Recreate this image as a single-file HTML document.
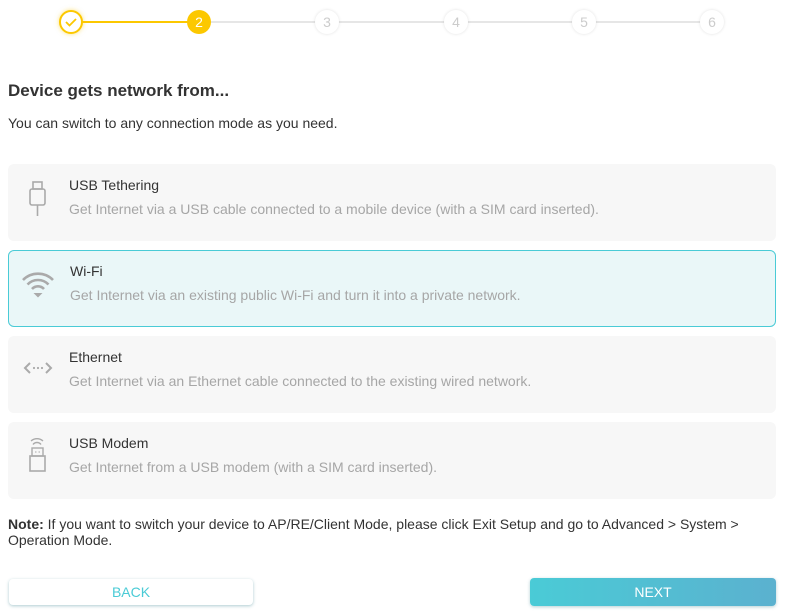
<!DOCTYPE html>
<html><head><meta charset="utf-8"><style>
body{margin:0;width:789px;height:613px;background:#fff;font-family:"Liberation Sans",Arial,sans-serif;position:relative;overflow:hidden}
.abs{position:absolute}
.line{position:absolute;top:21px;height:2px;background:#e6e6e6}
.st{position:absolute;top:10px;width:24px;height:24px;border-radius:50%;background:#fff;box-shadow:0 0 3px rgba(0,0,0,.12);color:#ccc;font-size:14px;text-align:center;line-height:24px}
.card{position:absolute;left:8px;width:768px;height:77px;background:#f7f7f7;border-radius:6px;box-sizing:border-box}
.card .t{position:absolute;left:61px;top:13px;font-size:14px;color:#333}
.card .d{position:absolute;left:61px;top:37px;font-size:14px;color:#a6a6a6}
.card svg{position:absolute;left:12px;top:16px}
</style></head><body>
<div class="line" style="left:71px;width:128px;background:#fcc800"></div>
<div class="line" style="left:199px;width:513px"></div>
<div class="st" style="left:59px;border:2px solid #fcc800;width:20px;height:20px;box-shadow:0 0 5px rgba(252,200,0,.5)"><svg width="20" height="20" viewBox="0 0 20 20"><path d="M5 10l3.5 3.5L15 7" fill="none" stroke="#fcc800" stroke-width="1.8"/></svg></div>
<div class="st" style="left:187px;background:#fcc800;color:#fff;box-shadow:none">2</div>
<div class="st" style="left:315px">3</div>
<div class="st" style="left:444px">4</div>
<div class="st" style="left:572px">5</div>
<div class="st" style="left:700px">6</div>

<div class="abs" style="left:8px;top:81px;font-size:17px;font-weight:bold;color:#333">Device gets network from...</div>
<div class="abs" style="left:8px;top:115px;font-size:14px;color:#333">You can switch to any connection mode as you need.</div>

<div class="card" style="top:164px"><svg width="36" height="40" viewBox="0 0 36 40"><rect x="13" y="2" width="9" height="7" fill="none" stroke="#aaa" stroke-width="1.6"/><rect x="10" y="9" width="15" height="16" rx="2" fill="none" stroke="#aaa" stroke-width="1.6"/><path d="M17.5 25v11" stroke="#aaa" stroke-width="1.6"/></svg><div class="t">USB Tethering</div><div class="d">Get Internet via a USB cable connected to a mobile device (with a SIM card inserted).</div></div>
<div class="card" style="top:250px;background:#eaf7f8;border:1px solid #4acbd6"><svg width="36" height="40" viewBox="0 0 36 40" style="left:11px;top:16px"><path d="M3 13a21 21 0 0 1 30 0M7.5 17.5a14.5 14.5 0 0 1 21 0M12 22a8 8 0 0 1 12 0" fill="none" stroke="#aaa" stroke-width="2.6"/><path d="M13.5 26h9l-4.5 4.5z" fill="#aaa"/></svg><div class="t" style="top:12px">Wi-Fi</div><div class="d" style="top:36px">Get Internet via an existing public Wi-Fi and turn it into a private network.</div></div>
<div class="card" style="top:336px"><svg width="36" height="40" viewBox="0 0 36 40"><path d="M10 11l-5 5 5 5M26 11l5 5-5 5" fill="none" stroke="#aaa" stroke-width="2"/><circle cx="14" cy="16" r="1.1" fill="#aaa"/><circle cx="18" cy="16" r="1.1" fill="#aaa"/><circle cx="22" cy="16" r="1.1" fill="#aaa"/></svg><div class="t">Ethernet</div><div class="d">Get Internet via an Ethernet cable connected to the existing wired network.</div></div>
<div class="card" style="top:422px"><svg width="36" height="40" viewBox="0 0 36 40"><path d="M11 3a9 9 0 0 1 12 0M13 6.5a5 5 0 0 1 8 0" fill="none" stroke="#aaa" stroke-width="1.4"/><rect x="12" y="10" width="11" height="8" fill="none" stroke="#aaa" stroke-width="1.4"/><rect x="10" y="18" width="15" height="15" fill="none" stroke="#aaa" stroke-width="1.6"/><path d="M15 14h1.5M18.5 14h1.5" stroke="#aaa"/></svg><div class="t">USB Modem</div><div class="d">Get Internet from a USB modem (with a SIM card inserted).</div></div>

<div class="abs" style="left:8px;top:516px;width:770px;font-size:14px;line-height:16px;color:#333"><b>Note:</b> If you want to switch your device to AP/RE/Client Mode, please click Exit Setup and go to Advanced &gt; System &gt; Operation Mode.</div>

<div class="abs" style="left:9px;top:579px;width:244px;height:26px;border-radius:4px;background:#fff;box-shadow:0 1px 3px rgba(70,140,150,.45);color:#4acbd6;font-size:14px;text-align:center;line-height:26px">BACK</div>
<div class="abs" style="left:530px;top:578px;width:246px;height:28px;border-radius:4px;background:linear-gradient(90deg,#4acbd6,#5bb1cf);box-shadow:0 1px 3px rgba(70,140,150,.4);color:#fff;font-size:14px;text-align:center;line-height:28px">NEXT</div>
</body></html>
